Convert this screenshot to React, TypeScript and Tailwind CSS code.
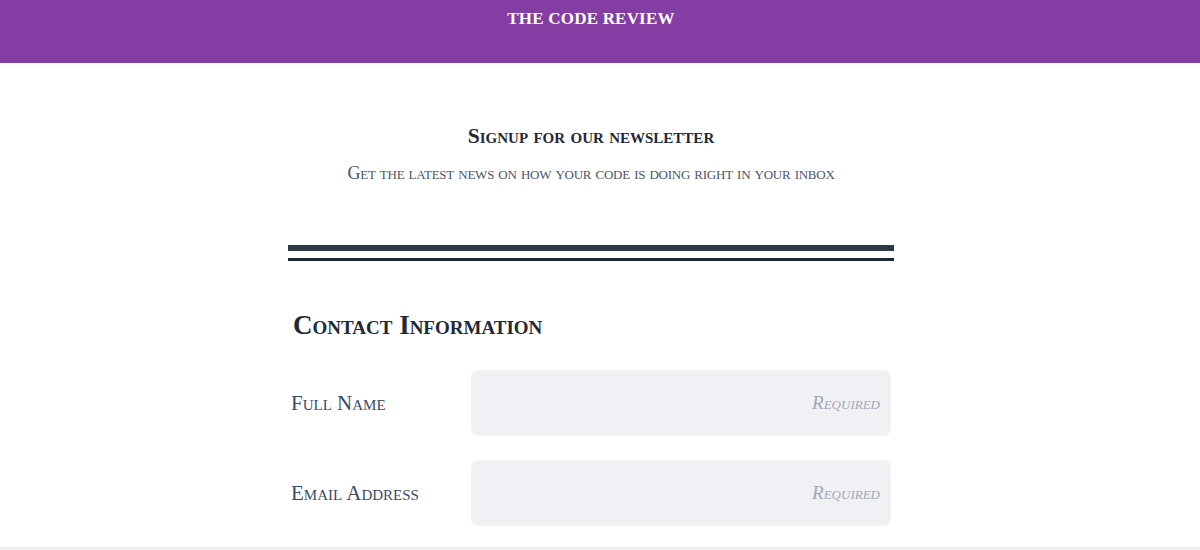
import React from "react";

const serif = "font-['Liberation_Serif','DejaVu_Serif',serif]";

export default function App() {
  return (
    <div className={`${serif} w-[1200px] h-[550px] overflow-hidden bg-white`}>
      <header className="h-[63px] bg-[#843da2]">
        <div className="w-[1182px] flex justify-center pt-[9px]">
          <h1 className="text-white font-bold text-[17px] leading-[20px] tracking-[0.2px]">THE CODE REVIEW</h1>
        </div>
      </header>
      <div className="w-[1182px]">
        <section className="flex flex-col items-center pt-[61px]">
          <h2 className="text-[#1f2937] font-bold text-[21.5px] leading-[24px] [font-variant:small-caps]">
            Signup for our newsletter
          </h2>
          <p className="mt-[15px] text-[#4a5568] text-[18px] leading-[20px] tracking-[-0.25px] [font-variant:small-caps]">
            Get the latest news on how your code is doing right in your inbox
          </p>
        </section>
        <div className="w-[606px] mx-auto mt-[62px]">
          <div className="h-[6px] bg-[#2d3748]" />
          <div className="h-[3px] bg-[#1f2937] mt-[7px]" />
          <h3 className="mt-[49px] ml-[5px] text-[#1f2937] font-bold text-[27px] leading-[30px] [font-variant:small-caps]">
            Contact Information
          </h3>
          <div className="mt-[30px] flex flex-col gap-[24px]">
            {["Full Name", "Email Address"].map((l) => (
              <div key={l} className="flex items-center">
                <label className="w-[183px] pl-[3px] text-[#3b4a6b] text-[21px] leading-[24px] [font-variant:small-caps]">{l}</label>
                <div className="w-[420px] h-[66px] rounded-[8px] bg-[#f0f1f4] flex items-center justify-end pr-[11px]">
                  <span className="italic text-[#a0a7b4] text-[19px] leading-[20px] [font-variant:small-caps]">Required</span>
                </div>
              </div>
            ))}
          </div>
        </div>
      </div>
      <div className="mt-[21px] h-[10px] bg-[#eef0f1] w-[1200px]" />
    </div>
  );
}
